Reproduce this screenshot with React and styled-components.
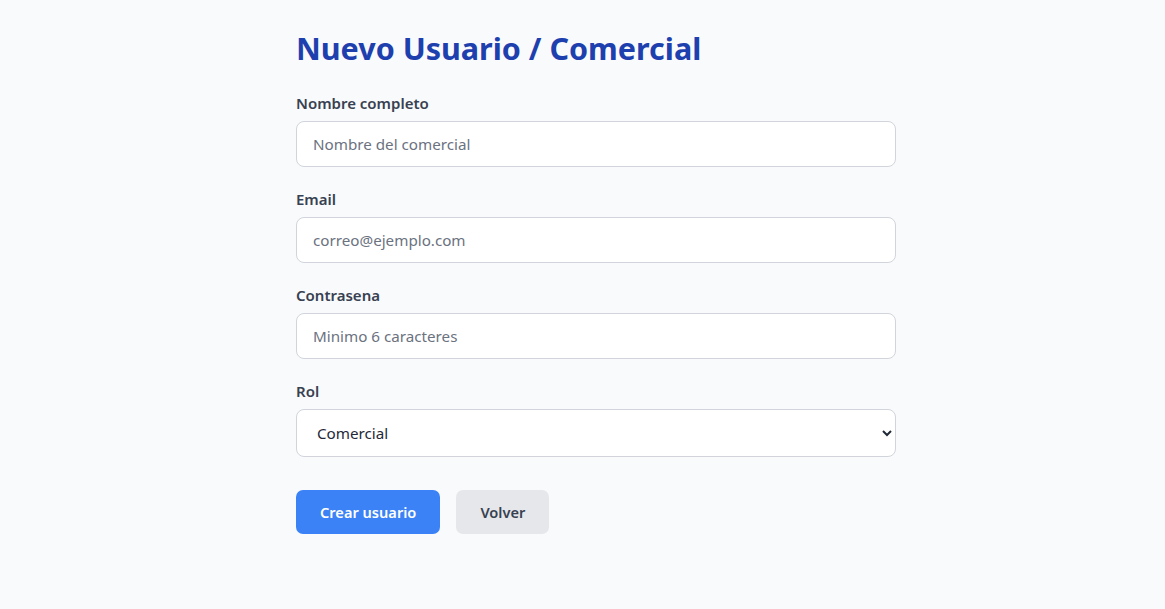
import React from "react";
import styled, { createGlobalStyle } from "styled-components";

const Global = createGlobalStyle`
  * { box-sizing: border-box; }
  html, body { margin: 0; padding: 0; background: #f9fafb; }
  body { font-family: "Noto Sans", "Open Sans", sans-serif; color: #1f2937; }
`;

const Page = styled.div`
  min-height: 609px;
  background: #f9fafb;
  padding: 26px 0 40px 296px;
`;

const Form = styled.form`
  width: 600px;
  display: flex;
  flex-direction: column;
`;

const Title = styled.h1`
  margin: 0 0 22px 0;
  font-size: 30.5px;
  line-height: 44px;
  font-weight: 700;
  color: #1e40af;
`;

const Field = styled.div`
  display: flex;
  flex-direction: column;
  gap: 7px;
  margin-bottom: 21px;
`;

const Label = styled.label`
  font-size: 15px;
  line-height: 22px;
  font-weight: 600;
  color: #374151;
`;

const Input = styled.input`
  height: 46px;
  border: 1px solid #d1d5db;
  border-radius: 8px;
  background: #fff;
  padding: 0 16px;
  font-family: inherit;
  font-size: 15.2px;
  color: #1f2937;
  outline: none;
  &::placeholder { color: #6b7280; }
`;

const Select = styled.select`
  height: 48px;
  border: 1px solid #d1d5db;
  border-radius: 8px;
  background: #fff;
  padding: 0 16px;
  font-family: inherit;
  font-size: 15.2px;
  color: #1f2937;
  outline: none;
`;

const Actions = styled.div`
  display: flex;
  gap: 16px;
  margin-top: 12px;
`;

const Button = styled.button`
  height: 44px;
  border: none;
  border-radius: 7px;
  padding: 0 24px;
  font-family: inherit;
  font-size: 14.6px;
  font-weight: 600;
  cursor: pointer;
  background: ${(p) => (p.$primary ? "#3b82f6" : "#e5e7eb")};
  color: ${(p) => (p.$primary ? "#ffffff" : "#374151")};
`;

export default function App() {
  return (
    <>
      <Global />
      <Page>
        <Form onSubmit={(e) => e.preventDefault()}>
          <Title>Nuevo Usuario / Comercial</Title>
          <Field>
            <Label>Nombre completo</Label>
            <Input placeholder="Nombre del comercial" />
          </Field>
          <Field>
            <Label>Email</Label>
            <Input placeholder="correo@ejemplo.com" />
          </Field>
          <Field>
            <Label>Contrasena</Label>
            <Input type="password" placeholder="Minimo 6 caracteres" />
          </Field>
          <Field>
            <Label>Rol</Label>
            <Select defaultValue="comercial">
              <option value="comercial">Comercial</option>
              <option value="admin">Administrador</option>
            </Select>
          </Field>
          <Actions>
            <Button type="submit" $primary>Crear usuario</Button>
            <Button type="button">Volver</Button>
          </Actions>
        </Form>
      </Page>
    </>
  );
}
